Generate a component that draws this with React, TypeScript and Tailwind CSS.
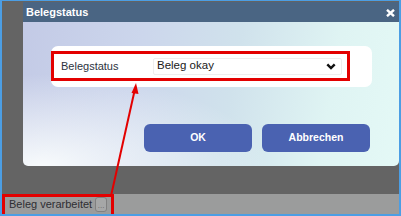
import React from "react";

export default function App() {
  return (
    <div
      className="relative w-[401px] h-[216px] overflow-hidden border-l-2 border-r-2 border-t border-b-2 border-[#4c9ee4] bg-[#646464] flex flex-col"
      style={{ fontFamily: '"Liberation Sans", Arial, sans-serif' }}
    >
      <div className="mt-[1px] ml-[21px] flex flex-col">
        <div className="h-[20px] bg-[#4a6583] flex items-center justify-between pl-[3px] pr-[4px]">
          <span className="text-white font-bold text-[11px] leading-none">Belegstatus</span>
          <svg width="9" height="8" viewBox="0 0 9 8" className="mt-[2px]">
            <path d="M1 0.8 L8 7.2 M8 0.8 L1 7.2" stroke="white" strokeWidth="2.4" />
          </svg>
        </div>
        <div className="h-[144px] rounded-b-[5px] bg-[radial-gradient(ellipse_at_5%_100%,rgba(250,253,253,0.95)_0%,rgba(250,253,253,0)_45%),linear-gradient(100deg,#c3cae6_0%,#ccd6ec_30%,#d0e2ec_55%,#dff4f3_80%,#e4f9f6_100%)] pt-[24px] pl-[28px] pr-[27px] flex flex-col">
          <div className="bg-white rounded-[7px] h-[41px] pt-[5px] pr-[22px]">
            <div className="h-[30px] border-[3px] border-[#e30000] flex items-center pl-[7px] pr-[5px]">
              <span className="w-[92px] text-[11px] text-[#2c3340]">Belegstatus</span>
              <div className="flex-1 h-[17px] border border-[#eeeeee] rounded-[2px] bg-white flex items-center justify-between pl-[3px] pr-[5px]">
                <span className="text-[11.5px] text-[#1a1a1a]">Beleg okay</span>
                <svg width="10" height="7" viewBox="0 0 10 7">
                  <path d="M1.3 1.3 L5 5 L8.7 1.3" fill="none" stroke="#111" strokeWidth="2.4" />
                </svg>
              </div>
            </div>
          </div>
          <div className="mt-[37px] flex justify-end gap-[10px] pr-[2px]">
            <button className="w-[108px] h-[28px] rounded-[6px] bg-[#4a62b1] text-white font-bold text-[10.5px]">OK</button>
            <button className="w-[108px] h-[28px] rounded-[6px] bg-[#4a62b1] text-white font-bold text-[10.5px]">Abbrechen</button>
          </div>
        </div>
      </div>
      <div className="flex-1" />
      <div className="h-[20px] bg-[#9b9c9c] flex items-center pl-[7px]">
        <span className="text-[11px] text-[#2e2e33]">Beleg verarbeitet</span>
        <div className="ml-[3px] w-[12px] h-[15px] border border-[#808080] rounded-[3px] bg-[#a6a7a7] flex items-end justify-center">
          <span className="text-[8px] leading-[10px] text-[#666]">...</span>
        </div>
      </div>
      <div className="absolute left-0 top-[193px] w-[112px] h-[23px] border-[3px] border-[#e30000] pointer-events-none" />
      <svg className="absolute left-0 top-0 pointer-events-none" width="401" height="216">
        <line x1="109" y1="195" x2="132.5" y2="90" stroke="#e30000" strokeWidth="2" />
        <polygon points="134,82 129.5,92 136.5,93" fill="#e30000" />
      </svg>
    </div>
  );
}
